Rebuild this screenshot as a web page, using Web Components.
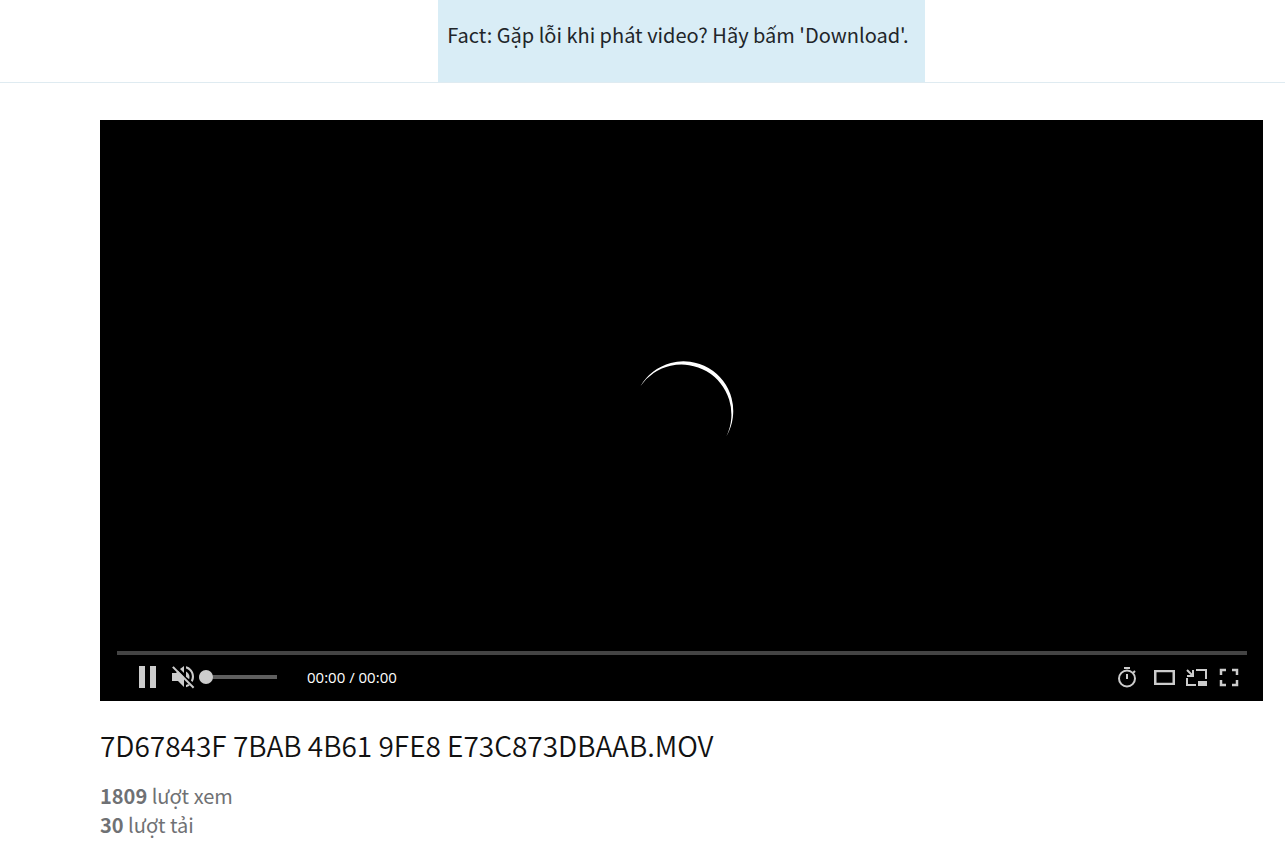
<!DOCTYPE html>
<html lang="vi">
<head>
<meta charset="utf-8">
<meta name="viewport" content="width=device-width, initial-scale=1">
<title>7D67843F 7BAB 4B61 9FE8 E73C873DBAAB.MOV</title>
<style>
  body {
    margin: 0;
    background: #fff;
    color: #212529;
    font-family: "Source Sans Pro", "Noto Sans CJK SC", "Noto Sans", sans-serif;
    font-weight: 400;
  }
</style>
</head>
<body>
<video-page>
  <fact-banner slot="header">Fact: Gặp lỗi khi phát video? Hãy bấm 'Download'.</fact-banner>
  <video-player current="00:00" duration="00:00"></video-player>
  <video-info name="7D67843F 7BAB 4B61 9FE8 E73C873DBAAB.MOV" views="1809" downloads="30"></video-info>
</video-page>

<script>
class VideoPage extends HTMLElement {
  constructor() {
    super();
    this.attachShadow({ mode: 'open' });
    this.shadowRoot.innerHTML = `
      <style>
        :host { display: block; }
        header {
          display: flex;
          justify-content: center;
          padding: 0 22px 0 100px;
          border-bottom: 1px solid #dfebf1;
        }
        main { padding: 37px 22px 0 100px; }
      </style>
      <header><slot name="header"></slot></header>
      <main><slot></slot></main>
    `;
  }
}

class FactBanner extends HTMLElement {
  constructor() {
    super();
    this.attachShadow({ mode: 'open' });
    this.shadowRoot.innerHTML = `
      <style>
        :host {
          display: block;
          padding: 20px 16px 32px 9px;
          background: #d9edf6;
        }
        p { margin: 0; font-size: 20px; line-height: 30px; }
      </style>
      <p><slot></slot></p>
    `;
  }
}

class LoadingSpinner extends HTMLElement {
  constructor() {
    super();
    this.attachShadow({ mode: 'open' });
    this.shadowRoot.innerHTML = `
      <style>
        :host { display: block; }
        svg { display: block; width: 104px; height: 104px; }
      </style>
      <svg viewBox="0 0 104 104" role="img" aria-label="Loading">
        <path fill="#fff" d="M10.500 28A49.400 49.400 0 0 1 96.500 78A49.900 49.900 0 0 0 10.500 28Z"/>
      </svg>
    `;
  }
}

class VolumeSlider extends HTMLElement {
  constructor() {
    super();
    this.attachShadow({ mode: 'open' });
    this.shadowRoot.innerHTML = `
      <style>
        :host { display: flex; }
        input {
          appearance: none;
          width: 78px;
          height: 14px;
          margin: 0;
          background: transparent;
        }
        input::-webkit-slider-runnable-track {
          height: 4px;
          background: #5f5f5f;
        }
        input::-webkit-slider-thumb {
          appearance: none;
          width: 14px;
          height: 14px;
          margin-top: -5px;
          border-radius: 50%;
          background: #ccc;
        }
      </style>
      <input type="range" min="0" max="100" value="0" aria-label="Volume">
    `;
  }
}

class ControlButton extends HTMLElement {
  connectedCallback() {
    if (!this.shadowRoot) this.attachShadow({ mode: 'open' });
    this.render();
  }

  getIcon() {
    const icons = {
      pause: '<path d="M3 1h6v22H3zM14 1h6v22h-6z"/>',
      muted: `
        <path d="M0 8h4l2-2 6 6v10l-6-6H0z"/>
        <path d="M8 4l4-3v7z"/>
        <path d="M14 6.500c2 1 3.500 3 3.500 5.500 0 .8-.2 1.600-.4 2.300L14 11.700z"/>
        <path d="M14 1.200c4.600 1 8 5.400 8 10.300 0 2.100-.5 4-1.500 5.600l-1.600-1.700c.6-1.200 1-2.500 1-3.900 0-3.700-2.500-7-5.900-8zM14 20v2.300c1.400-.3 2.700-.9 3.800-1.800l-1.500-1.500c-.7.500-1.500.8-2.300 1z"/>
        <path d="M1.600 1.200L22.300 21.900 20.900 23.400.1 2.600z"/>
      `,
      speed: `
        <path d="M9 2h6v2H9z"/>
        <path fill="none" stroke="#ccc" stroke-width="2" d="M12 9v5M18 8l2-2"/>
        <circle cx="12" cy="13.500" r="8" fill="none" stroke="#ccc" stroke-width="2"/>
      `,
      theater: '<path fill-rule="evenodd" d="M1 5h21v15H1zM3.500 7.200v10.600h16V7.200z"/>',
      pip: `
        <path d="M13 16h9v5h-9z"/>
        <path fill="none" stroke="#ccc" stroke-width="2" d="M11 5h10v9M2 13v7h9M2 5l6 6M8 5v6H2"/>
      `,
      fullscreen: '<path fill="none" stroke="#ccc" stroke-width="2.500" d="M4 10V5h5M15 5h5v5M20 15v5h-5M9 20H4v-5"/>'
    };
    return icons[this.getAttribute('icon')] || '';
  }

  render() {
    this.shadowRoot.innerHTML = `
      <style>
        :host { display: block; }
        button {
          display: block;
          padding: 0;
          border: 0;
          background: none;
          cursor: pointer;
        }
        svg { display: block; width: 24px; height: 24px; fill: #ccc; }
      </style>
      <button type="button" aria-label="${this.getAttribute('label')}">
        <svg viewBox="0 0 24 24" aria-hidden="true">${this.getIcon()}</svg>
      </button>
    `;
  }
}

class VideoPlayer extends HTMLElement {
  connectedCallback() {
    if (!this.shadowRoot) this.attachShadow({ mode: 'open' });
    this.render();
  }

  render() {
    this.shadowRoot.innerHTML = `
      <style>
        :host {
          display: flex;
          flex-direction: column;
          justify-content: flex-end;
          position: relative;
          aspect-ratio: 2.002;
          background: #000;
        }
        .overlay {
          position: absolute;
          inset: 0;
          display: grid;
          place-items: center;
          pointer-events: none;
        }
        .progress { height: 4px; margin: 0 16px 0 17px; background: #444; }
        .controls {
          display: flex;
          align-items: center;
          justify-content: space-between;
          padding: 10px 22px 12px 36px;
        }
        .group { display: flex; align-items: center; }
        .left { gap: 12px; }
        .right { gap: 14px; }
        .view { display: flex; gap: 8px; }
        .sound { display: flex; align-items: center; gap: 3px; }
        .time {
          margin-left: 18px;
          color: #fff;
          font: 400 15px/24px "Segoe UI", "Open Sans", "Noto Sans", sans-serif;
        }
      </style>
      <div class="overlay"><loading-spinner></loading-spinner></div>
      <div class="progress" role="progressbar" aria-label="Progress" aria-valuenow="0"></div>
      <div class="controls">
        <div class="group left">
          <control-button icon="pause" label="Pause"></control-button>
          <div class="sound">
            <control-button icon="muted" label="Unmute"></control-button>
            <volume-slider></volume-slider>
          </div>
          <span class="time">${this.getAttribute('current')} / ${this.getAttribute('duration')}</span>
        </div>
        <div class="group right">
          <control-button icon="speed" label="Playback speed"></control-button>
          <div class="view">
            <control-button icon="theater" label="Theater mode"></control-button>
            <control-button icon="pip" label="Picture in picture"></control-button>
            <control-button icon="fullscreen" label="Fullscreen"></control-button>
          </div>
        </div>
      </div>
    `;
  }
}

class VideoInfo extends HTMLElement {
  connectedCallback() {
    if (!this.shadowRoot) this.attachShadow({ mode: 'open' });
    this.render();
  }

  render() {
    this.shadowRoot.innerHTML = `
      <style>
        :host { display: block; padding-top: 26px; }
        h1 {
          margin: 0 0 18px;
          color: #111;
          font-size: 28px;
          font-weight: 350;
          line-height: 36px;
        }
        p { margin: 0; color: #6f7174; font-size: 20px; line-height: 29px; }
        b { font-weight: 700; }
      </style>
      <h1>${this.getAttribute('name')}</h1>
      <p><b>${this.getAttribute('views')}</b> lượt xem</p>
      <p><b>${this.getAttribute('downloads')}</b> lượt tải</p>
    `;
  }
}

customElements.define('video-page', VideoPage);
customElements.define('fact-banner', FactBanner);
customElements.define('loading-spinner', LoadingSpinner);
customElements.define('volume-slider', VolumeSlider);
customElements.define('control-button', ControlButton);
customElements.define('video-player', VideoPlayer);
customElements.define('video-info', VideoInfo);
</script>
</body>
</html>
